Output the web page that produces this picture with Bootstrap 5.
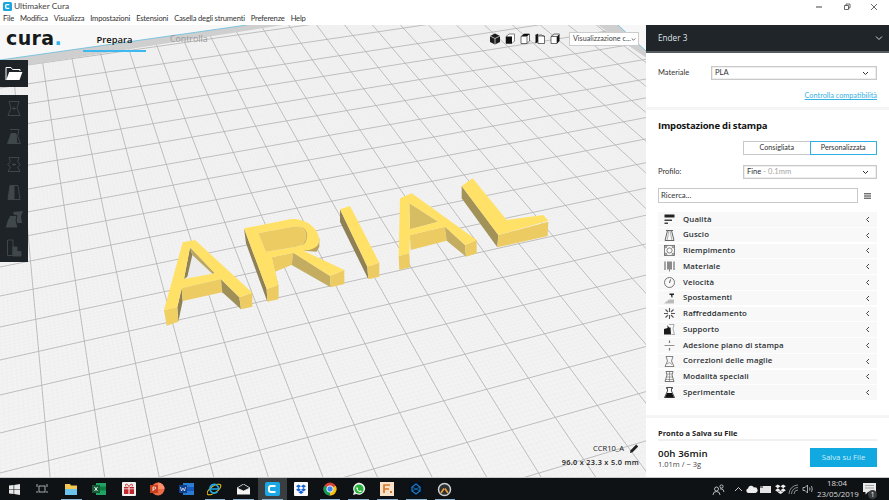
<!DOCTYPE html>
<html lang="it">
<head>
<meta charset="utf-8">
<title>Ultimaker Cura</title>
<link href="https://cdn.jsdelivr.net/npm/bootstrap@5.3.0/dist/css/bootstrap.min.css" rel="stylesheet">
<style>
html,body{height:100%;}
body{width:889px;height:500px;overflow:hidden;background:#fff;font-family:"Open Sans","Noto Sans",sans-serif;font-size:8.5px;color:#333;line-height:1.2;}
.win{height:500px;}
.title-row{height:13px;padding-left:3px;}
.title-txt{font-family:Lato,sans-serif;font-size:8.4px;margin-left:2px;color:#444;}
.win-ctl{gap:0;margin-right:1px;}
.win-ctl span{width:27.5px;display:flex;justify-content:center;}
.menu-row{height:12px;padding-left:3px;gap:6px;font-family:Lato,sans-serif;font-size:7.6px;letter-spacing:-.2px;color:#333;}
.stage{height:452px;}
.view3d{width:646px;position:relative;background:#f7f7f7;overflow:hidden;}
.view3d>svg.scene{position:absolute;left:0;top:0;width:646px;height:452px;}
.logo-txt{position:absolute;left:6px;top:0;font-family:"DejaVu Sans",sans-serif;font-weight:700;font-size:19px;letter-spacing:.4px;color:#15191c;line-height:26px;white-space:nowrap;}
.logo-txt b{color:#2fb3ea;font-size:19px;}
.tab-on{position:absolute;left:83px;top:7px;width:63px;height:20px;text-align:center;font-size:9.4px;font-weight:600;color:#111;border-bottom:2px solid #3cb9f0;line-height:15px;}
.tab-off{position:absolute;left:170px;top:7px;font-size:8.8px;font-weight:400;color:#999;line-height:15px;}
.tool-box{position:absolute;left:0;width:28px;background:#1d2327;}
.tool-open{top:35px;height:27px;}
.tool-set{top:70px;height:167px;}
.tool-cell{height:27.8px;}
.cube-bar{position:absolute;left:489px;top:7px;gap:3px;}
.view-pick{position:absolute;left:569px;top:7px;width:70px;height:14px;background:#fff;border:1px solid #ccc;font-family:Lato,sans-serif;font-size:7.2px;padding:0 2px 0 3px;color:#444;white-space:nowrap;}
.obj-name{position:absolute;right:7px;top:418px;font-size:7.6px;color:#222;gap:5px;}
.obj-size{position:absolute;right:7px;top:433px;font-size:7.3px;color:#222;letter-spacing:.32px;font-weight:600;}
.side{width:243px;background:#fff;}
.printer-bar{height:28px;background:#1f2529;border-bottom:2px solid #555b5f;color:#dfe3e6;padding:0 6px 0 12px;font-size:8.2px;}
.mat-row{height:38px;padding:13px 12px 0;}
.lbl{width:53px;font-family:Lato,sans-serif;font-size:7.5px;color:#333;flex:none;line-height:14px;}
.pick-box{height:14px;border:1px solid #c9c9c9;background:#fff;box-shadow:inset 0 0 0 .5px #ddd;font-family:Lato,sans-serif;font-size:7.6px;padding:0 7px 0 3px;color:#333;flex:1;}
.hint{color:#a5a5a5;}
.compat-link{font-family:Lato,sans-serif;font-size:7.3px;color:#37b0e3;text-decoration:underline;text-align:right;padding-right:12px;height:16px;line-height:10px;}
.sep{height:3px;background:#f5f5f5;}
.sec-title{font-size:9.5px;font-weight:700;color:#111;padding:10px 12px 0;height:31px;letter-spacing:-.2px;line-height:12px;}
.mode-group{margin-left:97px;width:134px;height:14px;display:flex;}
.mode-group .btn{flex:1;padding:0;font-family:Lato,sans-serif;font-size:7.2px;line-height:12px;border-radius:0;color:#333;background:#fff;border:1px solid #c9c9c9;}
.mode-group .btn.act{border-color:#2fb0e4;}
.prof-row{padding:10px 12px 0;height:24px;}
.prof-row .lbl{width:85px;}
.srch-row{padding:9px 12px 0;height:33px;}
.srch-row .form-control{height:15px;border-radius:0;padding:0 2px;font-family:Lato,sans-serif;font-size:7.8px;border:1px solid #c9c9c9;line-height:13px;color:#333;flex:1;display:flex;align-items:center;}
.burger{width:19px;height:15px;}
.set-list{margin:0 12px;border-radius:0;gap:1.25px;}
.set-list .list-group-item{height:14.5px;padding:0 7px 0 5px;border:0;border-radius:0;background:#f8f8f8;font-size:7.85px;font-weight:600;color:#2a2f33;display:flex;align-items:center;letter-spacing:.12px;}
.set-list svg.ic{width:13px;height:13px;margin-right:7px;flex:none;}
.set-list svg.cv{margin-left:auto;}
.fill-gap{flex:1;}
.ready{font-size:7.5px;font-weight:700;color:#222;padding:0 12px;margin-top:10px;height:10px;line-height:10px;}
.ready-line{height:2px;background:#f0f0f0;margin:1px 12px 0;}
.save-row{padding:7px 12px 0;height:36px;}
.time-big{font-size:9.7px;font-weight:600;color:#111;line-height:12px;letter-spacing:.1px;}
.time-sm{font-size:7.5px;color:#444;line-height:8px;}
.save-btn.btn{width:67px;height:19px;border-radius:0;border:0;background:#12a9e0;color:#cdeefb;font-size:7.8px;padding:0;}
.taskbar{height:23px;background:#0f1215;position:relative;border-top:1px solid #c9c9c9;}
.tb-cell{width:28.75px;height:22px;position:relative;}
.tb-cell.run::after{content:"";position:absolute;left:4px;right:4px;bottom:0;height:1px;background:#8db4d4;}
.tb-cell.cur{background:#3b3e41;}
.tb-first{width:28px;}
.tray{margin-left:auto;color:#ddd;gap:0;margin-right:9px;}
.tray-ic{width:14px;display:flex;justify-content:center;}
.tray-man{margin-right:6px;}
.clock{font-size:7.9px;color:#d8d8d8;text-align:center;line-height:11px;width:40px;margin:0 1px 0 2px;white-space:nowrap;}
.note{width:22px;display:flex;justify-content:center;position:relative;}
.note b{position:absolute;left:10px;top:7px;width:9px;height:9px;border-radius:50%;background:#3a3d40;color:#fff;font-size:6.5px;font-weight:400;line-height:9px;text-align:center;}
</style>
</head>
<body>
<div class="win d-flex flex-column">
  <div class="title-row d-flex align-items-center">
    <svg width="9" height="9" viewBox="0 0 9 9"><rect width="9" height="9" rx="1.5" fill="#1ba7dd"/><path d="M6.3 2.7H3.9Q2.6 2.7 2.6 4V5Q2.6 6.3 3.9 6.3H6.3" fill="none" stroke="#fff" stroke-width="1.3"/></svg>
    <span class="title-txt">Ultimaker Cura</span>
    <div class="win-ctl ms-auto d-flex align-items-center">
      <span><svg width="8" height="8" viewBox="0 0 8 8"><path d="M1 4H7" stroke="#444"/></svg></span>
      <span><svg width="8" height="8" viewBox="0 0 8 8"><path d="M1.5 2.5H5.5V6.5H1.5ZM3 2.5V1H7V5H5.5" fill="none" stroke="#444" stroke-width=".8"/></svg></span>
      <span><svg width="8" height="8" viewBox="0 0 8 8"><path d="M1 1L7 7M7 1L1 7" stroke="#444" stroke-width=".8"/></svg></span>
    </div>
  </div>
  <div class="menu-row d-flex align-items-center">
    <span>File</span><span>Modifica</span><span>Visualizza</span><span>Impostazioni</span><span>Estensioni</span><span>Casella degli strumenti</span><span>Preferenze</span><span>Help</span>
  </div>

  <div class="stage d-flex">
    <div class="view3d">
      <svg class="scene" viewBox="0 25 646 452" xmlns="http://www.w3.org/2000/svg">
        <defs><clipPath id="plate"><polygon points="0,60 247,25 618,25 646,51 646,477 0,477"/></clipPath></defs>
        <polygon points="0,60 247,25 618,25 646,51 646,477 0,477" fill="#f3f3f3"/>
        <g id="gridLines" clip-path="url(#plate)"></g>
        <polygon points="0,60 247,25 283,25 0,69.6" fill="#cfcfcf"/>
        <polygon points="598,25 618,25 646,51 646,57.5" fill="#cfcfcf"/>
        <path d="M0 60L247 25M618 25L646 51" stroke="#55b9e0" stroke-width=".7" fill="none"/>
        <g transform="translate(160 210) scale(.33333)">
          <!-- A -->
          <polygon points="90,112 72,207 165,190" fill="#ececec"/>
          <polygon points="90,112 72,207 82,200 97,135" fill="#8f8155"/>
          <polygon points="90,112 97,135 158,192 165,190" fill="#bba75f"/>
          <polygon points="52,292 65,235 68,273 55,335" fill="#8f8155"/>
          <polygon points="12,300 52,292 55,335 20,347" fill="#f0cf63"/>
          <polygon points="65,235 183,208 187,247 68,273" fill="#eccb63"/>
          <polygon points="183,208 238,262 243,298 187,247" fill="#a09058"/>
          <polygon points="238,262 277,248 277,290 243,298" fill="#eccb63"/>
          <path fill-rule="evenodd" d="M12 300L68 97L105 90L277 248L238 262L183 208L65 235L52 292ZM90 112L72 207L165 190Z" fill="#ffe168"/>
          <!-- R -->
          <polygon points="252,55 320,237 322,275 258,100" fill="#8f8155"/>
          <polygon points="335,142 400,128 395,165 345,185" fill="#eccb63"/>
          <polygon points="335,142 355,225 355,268 345,185" fill="#d8bc62"/>
          <polygon points="400,128 510,198 512,232 395,165" fill="#c4ac60"/>
          <path d="M478 85L478 110L470 125L430 122Z" fill="#b9a25c"/>
          <polygon points="320,237 355,225 355,268 322,275" fill="#eccb63"/>
          <polygon points="510,198 553,180 553,222 512,232" fill="#eccb63"/>
          <path fill-rule="evenodd" d="M252 55L390 28C430 22 475 50 478 90C478 110 460 120 430 122L553 180L510 198L400 128L335 142L355 225L320 237ZM295 70L318 125L400 112C415 108 430 105 435 95C445 70 430 45 400 50Z" fill="#ffe168"/>
          <path d="M295 70L400 50C430 45 445 70 435 95C430 105 415 108 400 112L318 125Z" fill="#eccb63"/>
          <path d="M418 48C445 60 445 90 425 107C432 102 437 98 439 90C446 70 438 55 418 48Z" fill="#b9a25c"/>
        </g>
        <g transform="translate(160 170) scale(.33333)">
          <!-- I -->
          <polygon points="540,118 622,290 625,328 540,155" fill="#8f8155"/>
          <polygon points="622,290 658,278 658,320 625,328" fill="#eccb63"/>
          <polygon points="540,118 570,108 658,278 622,290" fill="#ffe168"/>
          <!-- A 2 -->
          <polygon points="748,100 750,178 835,155" fill="#d6bc62"/>
          <polygon points="716,258 748,250 750,292 718,300" fill="#eccb63"/>
          <polygon points="750,195 855,170 860,212 752,240" fill="#eccb63"/>
          <polygon points="855,170 915,225 918,260 860,212" fill="#c4ac60"/>
          <polygon points="915,225 950,210 950,250 918,260" fill="#eccb63"/>
          <path fill-rule="evenodd" d="M716 258L720 85L755 70L950 210L915 225L855 170L750 195L748 250ZM748 100L750 178L835 155Z" fill="#ffe168"/>
          <!-- L -->
          <polygon points="905,48 1015,195 1012,232 905,85" fill="#a39258"/>
          <polygon points="1015,195 1165,155 1163,198 1012,232" fill="#eccb63"/>
          <polygon points="905,48 938,25 1040,150 1150,135 1165,152 1015,195" fill="#ffe168"/>
        </g>
      </svg>

      <div class="logo-txt">cura<b>.</b></div>
      <div class="tab-on">Prepara</div>
      <div class="tab-off">Controlla</div>

      <div class="tool-box tool-open d-flex align-items-center justify-content-center">
        <svg width="18" height="15" viewBox="0 0 18 15"><path d="M1 14V1.500H6L7.500 3.500H15V5" fill="none" stroke="#fff" stroke-width="1"/><path d="M4.200 6H17.400L14.500 14H1.200Z" fill="#fff"/></svg>
      </div>
      <div class="tool-box tool-set d-flex flex-column">
        <div class="tool-cell d-flex align-items-center justify-content-center"><svg width="16" height="17" viewBox="0 0 16 17" fill="none" stroke="#3f464a"><path d="M3 1.500H13L11 8L14 15.500H2L5 8Z"/><path d="M6 8.500H10M8 6.500V10.500" /></svg></div>
        <div class="tool-cell d-flex align-items-center justify-content-center"><svg width="16" height="17" viewBox="0 0 16 17" fill="none" stroke="#3f464a"><path d="M4 1.500H13L11.500 8L14.500 15.500H5"/><path d="M5 5.500H10L11 15.500H1.500L4 9Z" fill="#41484c"/></svg></div>
        <div class="tool-cell d-flex align-items-center justify-content-center"><svg width="18" height="17" viewBox="0 0 18 17" fill="none" stroke="#3f464a"><path d="M4 1.500H14L12.500 6L15.500 8.500L12.500 11L15 15.500H3L5.500 11L2.500 8.500L5.500 6Z"/><path d="M7 8.500H11M9 7V10"/></svg></div>
        <div class="tool-cell d-flex align-items-center justify-content-center"><svg width="14" height="17" viewBox="0 0 14 17" fill="#41484c" stroke="#3f464a"><path d="M3 1.500H7V15.500H1Z"/><path d="M7 1.500H11L13 15.500H7" fill="none"/></svg></div>
        <div class="tool-cell d-flex align-items-center justify-content-center"><svg width="20" height="18" viewBox="0 0 20 18" fill="#41484c"><path d="M9 1L19 0L17 5L18 12H12L11 6Z"/><path d="M6 4.500H13L12 9L14 17H1L3.500 9Z" stroke="#1d2327"/></svg></div>
        <div class="tool-cell d-flex align-items-center justify-content-center"><svg width="16" height="18" viewBox="0 0 16 18" fill="none" stroke="#3f464a"><path d="M1.500 1H7V16.500H1.500Z"/><path d="M7 8H11V12.500H15V17H7Z" fill="#41484c"/></svg></div>
      </div>

      <div class="cube-bar d-flex align-items-center">
        <svg width="12" height="14" viewBox="0 0 12 14"><path d="M6 1.500L11 4V10L6 12.500L1 10V4Z" fill="#1c1c1c"/><path d="M1 4L6 6.500L11 4M6 6.500V12.500" stroke="#f1f1f1" stroke-width=".7" fill="none"/></svg>
        <svg width="12" height="14" viewBox="0 0 12 14"><path d="M2 4.500L5 2H10.500V9L8 11.500H2Z" fill="#fff" stroke="#555" stroke-width=".7"/><rect x="2" y="4.500" width="6" height="7" fill="#111"/></svg>
        <svg width="12" height="14" viewBox="0 0 12 14"><path d="M2 4.500L5 2H10.500V9L8 11.500H2Z" fill="#fff" stroke="#333" stroke-width=".7"/><path d="M2 4.500H8L10.500 2L5 2Z" fill="#111"/><path d="M8 4.500V11.500" stroke="#333" stroke-width=".7"/></svg>
        <svg width="12" height="14" viewBox="0 0 12 14"><path d="M1.500 3L4 1.500V10L1.500 11.500Z" fill="#111"/><path d="M4 4H10.500V11.500H4Z" fill="#fff" stroke="#333" stroke-width=".7"/><path d="M1.500 3H7.500L10.500 4.500" fill="none" stroke="#333" stroke-width=".7"/></svg>
        <svg width="12" height="14" viewBox="0 0 12 14"><path d="M2 4.500H8V11.500H2Z" fill="#fff" stroke="#333" stroke-width=".7"/><path d="M8 4.500L10.500 2V9L8 11.500Z" fill="#111"/><path d="M2 4.500L5 2H10.500" fill="none" stroke="#333" stroke-width=".7"/></svg>
      </div>
      <div class="view-pick d-flex align-items-center justify-content-between"><span>Visualizzazione c...</span><svg width="7" height="5" viewBox="0 0 7 5"><path d="M1 1L3.500 3.500L6 1" fill="none" stroke="#333" stroke-width="1"/></svg></div>

      <div class="obj-name d-flex align-items-center"><span>CCR10_A</span><svg width="10" height="11" viewBox="0 0 10 11"><path d="M1 10L1.600 7.200L7.200 1.400L9.200 3.400L3.600 9.200Z" fill="#222"/></svg></div>
      <div class="obj-size">96.0 x 23.3 x 5.0 mm</div>
    </div>

    <div class="side d-flex flex-column">
      <div class="printer-bar d-flex align-items-center justify-content-between"><span>Ender 3</span><svg width="8" height="6" viewBox="0 0 8 6"><path d="M1 1.500L4 4.500L7 1.500" fill="none" stroke="#cfd3d6" stroke-width="1"/></svg></div>
      <div class="mat-row d-flex align-items-start">
        <span class="lbl">Materiale</span>
        <div class="pick-box d-flex align-items-center justify-content-between"><span>PLA</span><svg width="7" height="5" viewBox="0 0 7 5"><path d="M1 1L3.500 3.500L6 1" fill="none" stroke="#333"/></svg></div>
      </div>
      <div class="compat-link">Controlla compatibilità</div>
      <div class="sep"></div>
      <div class="sec-title">Impostazione di stampa</div>
      <div class="mode-group btn-group" role="group"><button type="button" class="btn">Consigliata</button><button type="button" class="btn act">Personalizzata</button></div>
      <div class="prof-row d-flex align-items-start">
        <span class="lbl">Profilo:</span>
        <div class="pick-box d-flex align-items-center justify-content-between"><span>Fine <span class="hint">- 0.1mm</span></span><svg width="7" height="5" viewBox="0 0 7 5"><path d="M1 1L3.500 3.500L6 1" fill="none" stroke="#333"/></svg></div>
      </div>
      <div class="srch-row d-flex align-items-start">
        <div class="form-control">Ricerca...</div>
        <div class="burger d-flex justify-content-center align-items-center"><svg width="7" height="6" viewBox="0 0 7 6"><path d="M0 .8H7M0 3H7M0 5.200H7" stroke="#333" stroke-width="1"/></svg></div>
      </div>
      <ul class="list-group set-list">
        <li class="list-group-item"><svg class="ic" viewBox="0 0 13 13"><path d="M1.500 1.500H11.500V4.500H1.500Z" fill="#222"/><path d="M1.500 6.500H9V8H1.500ZM1.500 9.500H5V11H1.500Z" fill="#444"/></svg>Qualità<svg class="cv" width="5" height="7" viewBox="0 0 5 7"><path d="M4 1L1.500 3.500L4 6" fill="none" stroke="#444"/></svg></li>
        <li class="list-group-item"><svg class="ic" viewBox="0 0 13 13" fill="none" stroke="#666"><path d="M3 1.500H10M4.500 1.500L2 11.500H11L8.500 1.500"/><path d="M6 1.500L4 11.500M7 1.500L9 11.500" stroke-width=".5"/></svg>Guscio<svg class="cv" width="5" height="7" viewBox="0 0 5 7"><path d="M4 1L1.500 3.500L4 6" fill="none" stroke="#444"/></svg></li>
        <li class="list-group-item"><svg class="ic" viewBox="0 0 13 13" fill="none" stroke="#666" stroke-width=".8"><rect x="1.500" y="1.500" width="10" height="10"/><circle cx="6.500" cy="6.500" r="2.600"/><circle cx="2.800" cy="2.800" r="1"/><circle cx="10.200" cy="2.800" r="1"/><circle cx="2.800" cy="10.200" r="1"/><circle cx="10.200" cy="10.200" r="1"/></svg>Riempimento<svg class="cv" width="5" height="7" viewBox="0 0 5 7"><path d="M4 1L1.500 3.500L4 6" fill="none" stroke="#444"/></svg></li>
        <li class="list-group-item"><svg class="ic" viewBox="0 0 13 13"><path d="M1.500 1.500H2.500V10H1.500ZM10.500 1.500H11.500V10H10.500Z" fill="#555"/><path d="M4 1.500H9V9.500H7V11.500H6V9.500H4Z" fill="#8a8a8a"/></svg>Materiale<svg class="cv" width="5" height="7" viewBox="0 0 5 7"><path d="M4 1L1.500 3.500L4 6" fill="none" stroke="#444"/></svg></li>
        <li class="list-group-item"><svg class="ic" viewBox="0 0 13 13" fill="none" stroke="#555" stroke-width=".8"><circle cx="6.500" cy="6.500" r="5"/><path d="M6.500 7L7.500 3.500" stroke-width="1"/></svg>Velocità<svg class="cv" width="5" height="7" viewBox="0 0 5 7"><path d="M4 1L1.500 3.500L4 6" fill="none" stroke="#444"/></svg></li>
        <li class="list-group-item"><svg class="ic" viewBox="0 0 13 13"><path d="M1 11.500L6 7.500H11V11.500Z" fill="#bbb"/><path d="M6.500 1.500H11V3H9.500V5.500H8.500L8 3H6.500Z" fill="#222"/></svg>Spostamenti<svg class="cv" width="5" height="7" viewBox="0 0 5 7"><path d="M4 1L1.500 3.500L4 6" fill="none" stroke="#444"/></svg></li>
        <li class="list-group-item"><svg class="ic" viewBox="0 0 13 13" stroke="#555" stroke-width="1.100"><path d="M6.500 1V5M6.500 8V12M1 6.500H5M8 6.500H12M2.500 2.500L5 5M8 8L10.500 10.500M10.500 2.500L8 5M5 8L2.500 10.500"/></svg>Raffreddamento<svg class="cv" width="5" height="7" viewBox="0 0 5 7"><path d="M4 1L1.500 3.500L4 6" fill="none" stroke="#444"/></svg></li>
        <li class="list-group-item"><svg class="ic" viewBox="0 0 13 13"><path d="M1 11.500V6L4.500 5V2L6 4.500H7.500L8 11.500Z" fill="#1b1b1b"/><path d="M6 1.500H11L10 6L11.500 11.500H8.500" fill="none" stroke="#888" stroke-width=".7"/></svg>Supporto<svg class="cv" width="5" height="7" viewBox="0 0 5 7"><path d="M4 1L1.500 3.500L4 6" fill="none" stroke="#444"/></svg></li>
        <li class="list-group-item"><svg class="ic" viewBox="0 0 13 13" stroke="#777"><path d="M1.500 6.500H11.500" stroke-width=".8"/><path d="M6.500 1.500V4M6.500 9V11.500" stroke-width="1.200"/></svg>Adesione piano di stampa<svg class="cv" width="5" height="7" viewBox="0 0 5 7"><path d="M4 1L1.500 3.500L4 6" fill="none" stroke="#444"/></svg></li>
        <li class="list-group-item"><svg class="ic" viewBox="0 0 13 13" fill="none" stroke="#666" stroke-width=".8"><path d="M3 1.500H10L8.500 6L11 11.500H2L4.500 6Z"/><path d="M4 9L6.500 7.500L9 9.500" stroke-width=".6"/></svg>Correzioni delle maglie<svg class="cv" width="5" height="7" viewBox="0 0 5 7"><path d="M4 1L1.500 3.500L4 6" fill="none" stroke="#444"/></svg></li>
        <li class="list-group-item"><svg class="ic" viewBox="0 0 13 13" fill="none" stroke="#555" stroke-width=".8"><path d="M3 1.500H10L9 5L11 11.500H2L4 5Z"/><path d="M4 4H9M3.500 7H9.500M3 9.500H10M6.500 1.500V11.500" stroke-width=".5"/></svg>Modalità speciali<svg class="cv" width="5" height="7" viewBox="0 0 5 7"><path d="M4 1L1.500 3.500L4 6" fill="none" stroke="#444"/></svg></li>
        <li class="list-group-item"><svg class="ic" viewBox="0 0 13 13"><path d="M3.500 1.500H9.500V2.500H8.500L8.500 5L11.500 11.500H1.500L4.500 5V2.500H3.500Z" fill="none" stroke="#222" stroke-width=".8"/><path d="M4 7H9L11 11.500H2Z" fill="#111"/></svg>Sperimentale<svg class="cv" width="5" height="7" viewBox="0 0 5 7"><path d="M4 1L1.500 3.500L4 6" fill="none" stroke="#444"/></svg></li>
      </ul>
      <div class="fill-gap"></div>
      <div class="sep"></div>
      <div class="ready">Pronto a Salva su File</div>
      <div class="ready-line"></div>
      <div class="save-row d-flex justify-content-between align-items-start">
        <div><div class="time-big">00h 36min</div><div class="time-sm">1.01m / ~ 3g</div></div>
        <button type="button" class="btn save-btn">Salva su File</button>
      </div>
    </div>
  </div>

  <div class="taskbar d-flex align-items-center">
    <div class="tb-cell tb-first d-flex align-items-center justify-content-center"><svg width="11" height="11" viewBox="0 0 11 11" fill="#e8e8e8"><path d="M0 1.600L4.600 1V5.200H0ZM5.200.9L11 0V5.200H5.200ZM0 5.800H4.600V10L0 9.400ZM5.200 5.800H11V11L5.200 10.100Z"/></svg></div>
    <div class="tb-cell d-flex align-items-center justify-content-center"><svg width="12" height="10" viewBox="0 0 12 10" fill="none" stroke="#bbb" stroke-width=".9"><rect x="3" y="2" width="6" height="6"/><path d="M1 1V3M1 7V9M11 1V3M11 7V9M0 0H2M10 0H12"/></svg></div>
    <div class="tb-cell run d-flex align-items-center justify-content-center"><svg width="14" height="13" viewBox="0 0 14 13"><path d="M1 1H6L7 2.500H13V12H1Z" fill="#f4c74e"/><rect x="1" y="6" width="12" height="6" fill="#6cc4ee"/></svg></div>
    <div class="tb-cell d-flex align-items-center justify-content-center"><svg width="15" height="14" viewBox="0 0 15 14"><rect x="4" y="1" width="10" height="12" fill="#21a366"/><rect x="4" y="4.500" width="10" height="4" fill="#107c41"/><rect x="0" y="3" width="8" height="8" fill="#185c37"/><path d="M2.500 5L5.500 9M5.500 5L2.500 9" stroke="#fff" stroke-width=".9"/></svg></div>
    <div class="tb-cell d-flex align-items-center justify-content-center"><svg width="14" height="14" viewBox="0 0 14 14"><rect width="14" height="14" rx="1" fill="#f4f0ee"/><rect x="2" y="5" width="10" height="7" fill="#c0272d"/><path d="M7 5V12" stroke="#fff"/><path d="M2 6.800H12" stroke="#fff" stroke-width=".7"/><path d="M7 4.500C5 1 2.500 2 4 4.500M7 4.500C9 1 11.500 2 10 4.500" fill="none" stroke="#c0272d"/></svg></div>
    <div class="tb-cell d-flex align-items-center justify-content-center"><svg width="15" height="14" viewBox="0 0 15 14"><circle cx="8" cy="7" r="6.500" fill="#ed6c47"/><path d="M8 .5A6.500 6.500 0 0 1 14.500 7H8Z" fill="#ff8f6b"/><rect x="0" y="3" width="8" height="8" fill="#c43e1c"/><path d="M3 9V5H4.500Q5.800 5 5.800 6T4.500 7.200H3" fill="none" stroke="#fff" stroke-width=".8"/></svg></div>
    <div class="tb-cell d-flex align-items-center justify-content-center"><svg width="15" height="14" viewBox="0 0 15 14"><rect x="4" y="1" width="11" height="12" fill="#2b7cd3"/><rect x="4" y="5" width="11" height="4" fill="#185abd"/><rect x="0" y="3" width="8" height="8" fill="#103f91"/><path d="M1.500 5L2.500 9L4 6L5.500 9L6.500 5" fill="none" stroke="#fff" stroke-width=".7"/></svg></div>
    <div class="tb-cell run d-flex align-items-center justify-content-center"><svg width="15" height="14" viewBox="0 0 15 14"><ellipse cx="7" cy="7.500" rx="8" ry="3.300" transform="rotate(-35 7 7.500)" fill="none" stroke="#f4c200" stroke-width="1"/><path d="M3.500 7H11.500A4.300 4.300 0 1 0 10.500 9.500" fill="none" stroke="#1ea7ea" stroke-width="1.700"/></svg></div>
    <div class="tb-cell run d-flex align-items-center justify-content-center"><svg width="15" height="11" viewBox="0 0 15 11"><path d="M1 4L7.500 0L14 4V10.500H1Z" fill="#f4f4f4"/><path d="M1 4L7.500 7L14 4L7.500 0Z" fill="#16191c" stroke="#f4f4f4" stroke-width=".7"/></svg></div>
    <div class="tb-cell cur run d-flex align-items-center justify-content-center"><svg width="15" height="14" viewBox="0 0 15 14"><rect width="15" height="14" rx="2" fill="#1ba7e4"/><path d="M10.500 4H6Q4 4 4 6V8Q4 10 6 10H10.500" fill="none" stroke="#fff" stroke-width="2"/></svg></div>
    <div class="tb-cell d-flex align-items-center justify-content-center"><svg width="14" height="14" viewBox="0 0 14 14"><rect width="14" height="14" rx="1" fill="#fbfbfb"/><path d="M4.500 2.500L7 4.300L4.500 6L2 4.300ZM9.500 2.500L12 4.300L9.500 6L7 4.300ZM4.500 6L7 7.800L4.500 9.500L2 7.800ZM9.500 6L12 7.800L9.500 9.500L7 7.800ZM4.500 10.300L7 8.600L9.500 10.300L7 12Z" fill="#1060d8"/></svg></div>
    <div class="tb-cell run d-flex align-items-center justify-content-center"><svg width="14" height="14" viewBox="0 0 14 14"><circle cx="7" cy="7" r="6.500" fill="#db4437"/><path d="M7 7L12.600 3.700A6.500 6.500 0 0 1 7 13.500Z" fill="#f4c20d"/><path d="M7 7V13.500A6.500 6.500 0 0 1 1.400 3.700Z" fill="#0f9d58"/><circle cx="7" cy="7" r="3.200" fill="#4285f4" stroke="#fff" stroke-width=".9"/></svg></div>
    <div class="tb-cell run d-flex align-items-center justify-content-center"><svg width="14" height="14" viewBox="0 0 14 14"><path d="M1 13L2 9.800A6 6 0 1 1 4.300 12Z" fill="#f2f2f2"/><circle cx="7" cy="7" r="4.600" fill="#25b23c"/><path d="M5 4.800L6 6.600L5.500 7.200Q6.500 8.600 8 9L8.800 8.200L10 9.200Q8.800 10.500 7 9.700Q4.800 8.600 4.300 6.400Q4.300 5.300 5 4.800Z" fill="#fff"/></svg></div>
    <div class="tb-cell run d-flex align-items-center justify-content-center"><svg width="14" height="14" viewBox="0 0 14 14"><rect width="14" height="14" fill="#f9e3c8"/><path d="M4 11V3H10M4 7H9" fill="none" stroke="#d9772c" stroke-width="1.700"/><path d="M10 9H12V11H10Z" fill="#d9772c"/></svg></div>
    <div class="tb-cell run d-flex align-items-center justify-content-center"><svg width="14" height="14" viewBox="0 0 14 14"><rect width="14" height="14" fill="#05101a"/><path d="M7 2L11 5V9L7 12L3 9V5Z" fill="none" stroke="#1b76c4" stroke-width="1.300"/><path d="M3 5L11 9M11 5L3 9" stroke="#1b76c4" stroke-width=".8"/></svg></div>
    <div class="tb-cell run d-flex align-items-center justify-content-center"><svg width="15" height="15" viewBox="0 0 15 15"><circle cx="7.500" cy="7.500" r="6" fill="#2c2f33" stroke="#cfcfcf" stroke-width="1.500"/><path d="M4 11L7 6.500M11 11L8 6.500" stroke="#e9a13b" stroke-width="1.600"/></svg></div>

    <div class="tray d-flex align-items-center">
      <span class="tray-ic tray-man"><svg width="13" height="11" viewBox="0 0 13 11" fill="none" stroke="#ddd" stroke-width=".8"><circle cx="4.500" cy="5" r="2"/><path d="M1 11Q1 7.500 4.500 7.500T8 11"/><circle cx="9.500" cy="2.500" r="1.600"/><path d="M8 4.800Q12 4.500 12 8"/></svg></span>
      <span class="tray-ic"><svg width="9" height="6" viewBox="0 0 9 6"><path d="M1 5L4.500 1.500L8 5" fill="none" stroke="#ddd" stroke-width=".9"/></svg></span>
      <span class="tray-ic"><svg width="12" height="8" viewBox="0 0 12 8"><path d="M2.500 8A2.300 2.300 0 0 1 2 3.500A3.200 3.200 0 0 1 8 2.500A2.800 2.800 0 0 1 9.500 8Z" fill="#eee"/></svg></span>
      <span class="tray-ic"><svg width="12" height="8" viewBox="0 0 12 8"><rect x="0" y="1" width="11" height="7" fill="#e5e5e5"/><path d="M0 3H3V1H0Z" fill="#777"/></svg></span>
      <span class="tray-ic"><svg width="11" height="10" viewBox="0 0 14 13" fill="#eee"><path d="M3.500 .5L7 3L3.500 5.500L0 3ZM10.500 .5L14 3L10.500 5.500L7 3ZM3.500 5.500L7 8L3.500 10.500L0 8ZM10.500 5.500L14 8L10.500 10.500L7 8ZM3.500 11L7 8.800L10.500 11L7 13Z"/></svg></span>
      <span class="tray-ic"><svg width="12" height="10" viewBox="0 0 12 10" fill="none" stroke="#aaa" stroke-width=".8"><path d="M1 10A9 9 0 0 1 10 1M3.500 10A6.500 6.500 0 0 1 10 3.500M6 10A4 4 0 0 1 10 6"/></svg></span>
      <span class="tray-ic"><svg width="12" height="10" viewBox="0 0 12 10" fill="none" stroke="#ccc" stroke-width=".8"><path d="M1 3.500H3L5.500 1V9L3 6.500H1Z"/><path d="M7.500 3.500Q8.500 5 7.500 6.500M9.500 2Q11 5 9.500 8"/></svg></span>
      <div class="clock"><div>18:04</div><div>23/05/2019</div></div>
      <div class="note"><svg width="13" height="12" viewBox="0 0 13 12"><path d="M0 0H13V9H5L2.500 11.500V9H0Z" fill="#e8e8e8"/><path d="M2 2.500H11M2 5H11" stroke="#888" stroke-width=".7"/></svg><b>1</b></div>
    </div>
  </div>
</div>
<script>
(function(){
  var NS='http://www.w3.org/2000/svg',g=document.getElementById('gridLines');
  function add(x1,y1,x2,y2,c,w){var l=document.createElementNS(NS,'line');l.setAttribute('x1',x1);l.setAttribute('y1',y1);l.setAttribute('x2',x2);l.setAttribute('y2',y2);l.setAttribute('stroke',c);l.setAttribute('stroke-width',w);g.appendChild(l);}
  var vx=-34,vy=-450;
  function lineB(x,c,w){var f=(25-vy)/(476-vy),f2=(478-vy)/(476-vy);add(vx+(x-vx)*f,25,vx+(x-vx)*f2,478,c,w);}
  function lineA(y,c,w){var s=(y+447)/3600;add(0,y,646,y-646*s,c,w);}
  var ys=[49,69,88,108,128,149,170,194,217,241,267,296,327,360,395,433,473,520,575,635,700,770,850];
  var i,j;
  for(i=-2;i<26;i++){for(j=1;j<10;j++){lineB(50+54.5*(i+j/10),'#ebebeb',.4);}}
  for(i=0;i<ys.length-1;i++){for(j=1;j<10;j++){lineA(ys[i]+(ys[i+1]-ys[i])*j/10,'#ebebeb',.4);}}
  for(i=-2;i<26;i++){lineB(50+54.5*i,'#b4b4b4',.85);}
  for(i=0;i<ys.length;i++){lineA(ys[i],'#b4b4b4',.85);}
})();
</script>
<script src="https://cdn.jsdelivr.net/npm/bootstrap@5.3.0/dist/js/bootstrap.bundle.min.js"></script>
</body>
</html>
